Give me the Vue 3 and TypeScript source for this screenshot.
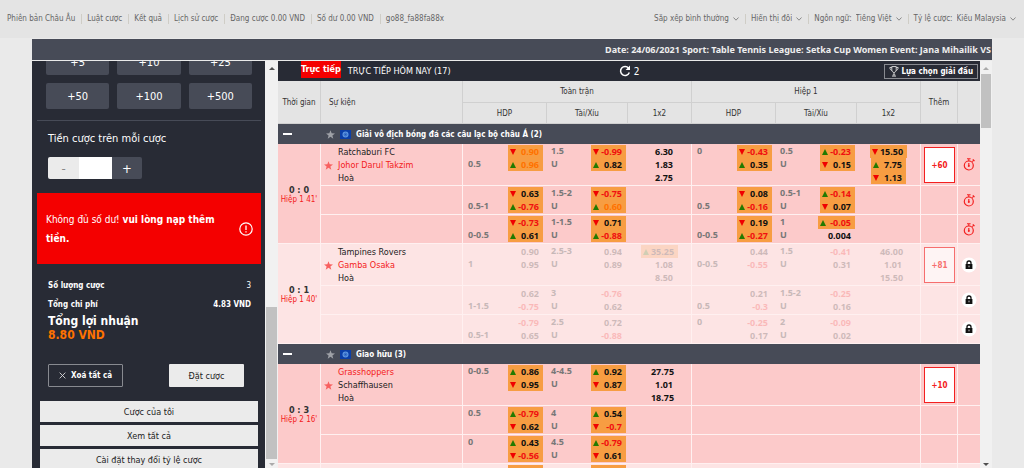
<script setup lang="ts">
type Arrow = 'up' | 'down' | ''

interface Odd {
  value: string
  arrow: Arrow
  tone: 'plain' | 'red' | 'orange'
}

interface Cell {
  kind: 'hdp' | 'ou' | 'x12'
  labels: string[]
  odds: Odd[]
}

interface Line {
  cells: Cell[]
}

interface Match {
  score: string
  clock: string
  home: string
  away: string
  favourite: 'home' | 'away'
  more: string
  locked: boolean
  timer: boolean
  lines: Line[]
}

interface League {
  name: string
  matches: Match[]
}

// "v" / "^" prefix sets the arrow, "!" marks an orange value, a leading minus is red
function odd(text: string): Odd {
  let rest = text
  let arrow: Arrow = ''
  if (rest.startsWith('v')) arrow = 'down'
  if (rest.startsWith('^')) arrow = 'up'
  if (arrow) rest = rest.slice(1)
  const orange = rest.startsWith('!')
  if (orange) rest = rest.slice(1)
  return { value: rest, arrow, tone: orange ? 'orange' : rest.startsWith('-') ? 'red' : 'plain' }
}

// six columns per line, each "labels|odds", entries separated by commas
function line(...columns: string[]): Line {
  const kinds: Cell['kind'][] = ['hdp', 'ou', 'x12', 'hdp', 'ou', 'x12']
  return {
    cells: kinds.map((kind, i) => {
      const [labels = '', odds = ''] = (columns[i] ?? '').split('|')
      return {
        kind,
        labels: labels ? labels.split(',') : [],
        odds: odds ? odds.split(',').map(odd) : [],
      }
    }),
  }
}

const accountLinks = [
  'Phiên bản Châu Âu',
  'Luật cược',
  'Kết quả',
  'Lịch sử cược',
  'Đang cược 0.00 VND',
  'Số dư 0.00 VND',
  'go88_fa88fa88x',
]

const settings = [
  { id: 'sort', label: '', value: 'Sắp xếp bình thường' },
  { id: 'view', label: '', value: 'Hiển thị đôi' },
  { id: 'language', label: 'Ngôn ngữ:', value: 'Tiếng Việt' },
  { id: 'odds', label: 'Tỷ lệ cược:', value: 'Kiểu Malaysia' },
]

const chips = ['+5', '+10', '+25', '+50', '+100', '+500']
const panelLinks = ['Cược của tôi', 'Xem tất cả', 'Cài đặt thay đổi tỷ lệ cược']
const markets = ['HDP', 'Tài/Xíu', '1x2', 'HDP', 'Tài/Xíu', '1x2']

const leagues: League[] = [
  {
    name: 'Giải vô địch bóng đá các câu lạc bộ châu Á (2)',
    matches: [
      {
        score: '0 : 0',
        clock: "Hiệp 1 41'",
        home: 'Ratchaburi FC',
        away: 'Johor Darul Takzim',
        favourite: 'away',
        more: '+60',
        locked: false,
        timer: true,
        lines: [
          line(' ,0.5|v!0.90,^!0.96', '1.5,U|v-0.99,^0.82', '|6.30,1.83,2.75', '0|v-0.43,^0.35', '0.5,U|^-0.23,v0.15', '|v15.50,^7.75,v1.13'),
          line(' ,0.5-1|v0.63,^-0.76', '1.5-2,U|v-0.75,^!0.60', '', ' ,0.5|v0.08,^-0.16', '0.5-1,U|^-0.14,v0.07', ''),
          line(' ,0-0.5|v-0.73,^0.61', '1-1.5,U|v0.71,^-0.88', '', ' ,0-0.5|v0.19,^-0.27', '1,U|^-0.05,0.004', ''),
        ],
      },
      {
        score: '0 : 1',
        clock: "Hiệp 1 40'",
        home: 'Tampines Rovers',
        away: 'Gamba Osaka',
        favourite: 'away',
        more: '+81',
        locked: true,
        timer: false,
        lines: [
          line(' ,1|0.90,0.95', '2.5-3,U|0.94,0.89', '|^35.25,1.08,8.50', ' ,0-0.5|0.44,-0.55', '1.5,U|-0.41,0.31', '|46.00,1.01,15.50'),
          line(' ,1-1.5|0.62,-0.75', '3,U|-0.76,0.62', '', ' ,0.5|0.21,-0.3', '1.5-2,U|-0.25,0.16', ''),
          line(' ,0.5-1|-0.79,0.65', '2.5,U|0.72,-0.88', '', '0|-0.25,0.17', '2,U|-0.09,0.02', ''),
        ],
      },
    ],
  },
  {
    name: 'Giao hữu (3)',
    matches: [
      {
        score: '0 : 3',
        clock: "Hiệp 2 16'",
        home: 'Grasshoppers',
        away: 'Schaffhausen',
        favourite: 'home',
        more: '+10',
        locked: false,
        timer: false,
        lines: [
          line('0-0.5|^0.86,v0.95', '4-4.5,U|^0.92,v0.87', '|27.75,1.01,18.75', '', '', ''),
          line('0.5|^-0.79,v0.62', '4,U|^0.54,v-0.7', '', '', '', ''),
          line('0|^0.43,v-0.56', '4.5,U|^-0.79,v0.61', '', '', '', ''),
        ],
      },
    ],
  },
]
</script>

<template>
  <div class="page">
    <header class="topbar">
      <nav class="links">
        <a v-for="item in accountLinks" :key="item" href="#">{{ item }}</a>
      </nav>
      <div class="settings">
        <div v-for="s in settings" :key="s.id" class="setting">
          <label v-if="s.label" :for="s.id">{{ s.label }}</label>
          <select :id="s.id" :aria-label="s.label || s.value">
            <option>{{ s.value }}</option>
          </select>
          <svg class="chevron" viewBox="0 0 6 4"><path d="M0.5 0.5 3 3.2 5.5 0.5" fill="none" stroke="#888" /></svg>
        </div>
      </div>
    </header>

    <div class="frame">
      <div class="ticker">Date: 24/06/2021 Sport: Table Tennis League: Setka Cup Women Event: Jana Mihailik VS</div>

      <div class="columns">
        <aside class="slip">
          <div class="chips">
            <button v-for="c in chips" :key="c" type="button">{{ c }}</button>
          </div>
          <hr />
          <div class="stake">
            <label for="stake">Tiền cược trên mỗi cược</label>
            <div class="stepper">
              <button type="button" class="minus">-</button>
              <input id="stake" type="text" />
              <button type="button" class="plus">+</button>
            </div>
          </div>
          <div class="alert" role="alert">
            <p>Không đủ số dư! <b>vui lòng nạp thêm tiền.</b></p>
            <svg viewBox="0 0 14 14">
              <circle cx="7" cy="7" r="6.2" fill="none" stroke="#fff" stroke-width="1.2" />
              <path d="M7 3.4V8" stroke="#fff" stroke-width="1.3" />
              <path d="M7 9.2v1.4" stroke="#fff" stroke-width="1.3" />
            </svg>
          </div>
          <dl class="summary">
            <div><dt>Số lượng cược</dt><dd>3</dd></div>
            <div><dt>Tổng chi phí</dt><dd><b>4.83 VND</b></dd></div>
          </dl>
          <p class="profit">Tổng lợi nhuận<strong>8.80 VND</strong></p>
          <div class="actions">
            <button type="button" class="clear">
              <svg viewBox="0 0 8 8"><path d="M0.7 0.7 7.3 7.3M7.3 0.7 0.7 7.3" stroke="#ddd" fill="none" /></svg>
              Xoá tất cả
            </button>
            <button type="button" class="place">Đặt cược</button>
          </div>
          <div class="panel-links">
            <button v-for="p in panelLinks" :key="p" type="button">{{ p }}</button>
          </div>
        </aside>

        <div class="scroll scroll-left">
          <i class="arrow-up dark"></i>
          <span class="thumb"></span>
          <i class="arrow-down"></i>
        </div>

        <main class="board">
          <div class="board-title">
            <div class="live">
              <span class="badge">Trực tiếp</span>
              <h1>TRỰC TIẾP HÔM NAY (17)</h1>
            </div>
            <button type="button" class="refresh">
              <svg viewBox="0 0 12 12">
                <path d="M9.6 3.2A4.5 4.5 0 1 0 10.3 7.6" fill="none" stroke="#fff" stroke-width="1.5" />
                <path d="M11 0.6V5H6.6Z" fill="#fff" />
              </svg>
              2
            </button>
            <button type="button" class="choose">
              <svg viewBox="0 0 10 12" fill="none" stroke="#ddd">
                <path d="M2.6 0.6h4.8v3.2c0 2-1 3-2.4 3.4-1.4-.4-2.4-1.4-2.4-3.4Z" />
                <path d="M2.6 1.6H0.5c0 2 .8 2.9 2.4 3.2M7.4 1.6h2.1c0 2-.8 2.9-2.4 3.2M5 7.2v2.6M2.8 11h4.4M3.6 9.8h2.8" />
              </svg>
              Lựa chọn giải đấu
            </button>
          </div>

          <table>
            <colgroup>
              <col class="w-time" /><col class="w-event" />
              <col class="w-hdp" /><col class="w-ou" /><col class="w-x12" />
              <col class="w-hdp" /><col class="w-ou" /><col class="w-x12" />
              <col class="w-more" /><col class="w-icon" />
            </colgroup>
            <thead>
              <tr>
                <th rowspan="2">Thời gian</th>
                <th rowspan="2" class="event-head">Sự kiện</th>
                <th colspan="3">Toàn trận</th>
                <th colspan="3">Hiệp 1</th>
                <th rowspan="2">Thêm</th>
                <th rowspan="2" class="last"></th>
              </tr>
              <tr>
                <th v-for="(m, i) in markets" :key="i">{{ m }}</th>
              </tr>
            </thead>
            <tbody v-for="league in leagues" :key="league.name">
              <tr class="league">
                <td><span class="dash"></span></td>
                <td colspan="9">
                  <div class="league-name">
                    <svg class="star" viewBox="0 0 10 10"><path d="M5 0.2 6.3 3.7 10 3.8 7.1 6.1 8.1 9.7 5 7.6 1.9 9.7 2.9 6.1 0 3.8 3.7 3.7Z" fill="#9fa1a7" /></svg>
                    <svg class="flag" viewBox="0 0 11 9">
                      <rect width="11" height="9" fill="#0b3fa8" />
                      <circle cx="5.5" cy="4.5" r="3" fill="#5b94e0" />
                      <path d="M3.5 4.5h4M5.5 2.5v4M4 3l3 3M7 3 4 6" stroke="#1d55b8" stroke-width="0.5" />
                    </svg>
                    {{ league.name }}
                  </div>
                </td>
              </tr>
              <template v-for="match in league.matches" :key="match.home">
                <tr v-for="(row, r) in match.lines" :key="r" :class="['line', { tall: r === 0, locked: match.locked }]">
                  <td v-if="r === 0" :rowspan="match.lines.length" class="time">
                    <b>{{ match.score }}</b>
                    <span>{{ match.clock }}</span>
                  </td>
                  <td class="event">
                    <div v-if="r === 0" class="teams">
                      <svg class="star" viewBox="0 0 10 10"><path d="M5 0.2 6.3 3.7 10 3.8 7.1 6.1 8.1 9.7 5 7.6 1.9 9.7 2.9 6.1 0 3.8 3.7 3.7Z" fill="#f8605f" /></svg>
                      <div>
                        <p :class="{ fav: match.favourite === 'home' }">{{ match.home }}</p>
                        <p :class="{ fav: match.favourite === 'away' }">{{ match.away }}</p>
                        <p>Hoà</p>
                      </div>
                    </div>
                  </td>
                  <td v-for="(cell, c) in row.cells" :key="c" :class="cell.kind">
                    <div class="cell">
                      <div v-if="cell.labels.length" class="labels">
                        <span v-for="(l, i) in cell.labels" :key="i">{{ l }}</span>
                      </div>
                      <div v-if="cell.odds.length" class="odds">
                        <a v-for="(o, i) in cell.odds" :key="i" href="#" :class="['odd', o.tone, { moved: o.arrow }]">
                          <i :class="['arrow', o.arrow]"></i>
                          <span>{{ o.value }}</span>
                        </a>
                      </div>
                    </div>
                  </td>
                  <td class="more"><button v-if="r === 0" type="button">{{ match.more }}</button></td>
                  <td class="icon">
                    <svg v-if="match.timer" class="timer" viewBox="0 0 12 13" fill="none" stroke="#f32020">
                      <circle cx="5.8" cy="7.5" r="4.5" stroke-width="1.2" />
                      <path d="M5.8 1v2M4 0.8h3.6M9.3 3.6l1.4-1.4M9.8 1.4l1.7 1.6" stroke-width="1.1" />
                      <path d="M5.8 5v3" stroke-width="1.2" />
                      <circle cx="5.8" cy="8" r="1" fill="#f32020" stroke="none" />
                    </svg>
                    <svg v-if="match.locked" class="lock" viewBox="0 0 16 16">
                      <circle cx="8" cy="8" r="7.5" fill="#fff" />
                      <path d="M6 7.5V6a2 2 0 0 1 4 0v1.5" fill="none" stroke="#111" stroke-width="1.3" />
                      <rect x="4.6" y="7" width="6.8" height="5" fill="#111" />
                      <path d="M8 8.6v1.7" stroke="#fff" stroke-width="0.8" />
                    </svg>
                  </td>
                </tr>
              </template>
            </tbody>
            <tbody>
              <tr class="line next">
                <td></td>
                <td></td>
                <td v-for="k in ['hdp', 'ou']" :key="k" :class="k">
                  <div class="cell"><div class="odds"><span class="odd moved"></span></div></div>
                </td>
                <td></td>
                <td class="hdp"></td>
                <td class="ou"></td>
                <td></td>
                <td></td>
                <td></td>
              </tr>
            </tbody>
          </table>
        </main>

        <div class="scroll scroll-right">
          <i class="arrow-up"></i>
          <span class="thumb"></span>
          <i class="arrow-down dark"></i>
        </div>
      </div>
    </div>
  </div>
</template>

<style>
body {
  background: #eaeaea;
  overflow: hidden;
}
</style>

<style scoped>
* {
  box-sizing: border-box;
}

.page {
  display: flex;
  flex-direction: column;
  height: 100vh;
  font-family: "DejaVu Sans Condensed", "Noto Sans", sans-serif;
  font-size: 9px;
  color: #333;
}

button,
input,
select {
  font: inherit;
  color: inherit;
  border: 0;
  padding: 0;
  margin: 0;
  background: none;
}

a {
  color: inherit;
  text-decoration: none;
}

p,
dl,
dd,
h1 {
  margin: 0;
}

/* top bar */
.topbar {
  display: flex;
  justify-content: space-between;
  align-items: center;
  flex: none;
  height: 38px;
  padding: 0 8px 0 7px;
  background: #e4e4e4;
  color: #666;
  font-size: 8px;
  white-space: nowrap;
}

.links,
.settings,
.setting {
  display: flex;
  align-items: center;
}

.links a,
.setting {
  line-height: 10px;
  padding-right: 6px;
  margin-right: 5px;
  border-right: 1px solid #cfcdc6;
}

.links a:last-child,
.setting:last-child {
  border: 0;
  padding: 0;
  margin: 0;
}

.setting {
  gap: 4px;
}

select {
  appearance: none;
  field-sizing: content;
  line-height: 10px;
}

.chevron {
  width: 6px;
  height: 4px;
}

/* frame */
.frame {
  display: flex;
  flex-direction: column;
  flex: 1;
  min-height: 0;
  margin: 1px 32px 0;
}

.ticker {
  display: flex;
  justify-content: flex-end;
  flex: none;
  height: 21px;
  line-height: 21px;
  margin-bottom: 1px;
  padding-right: 1px;
  overflow: hidden;
  white-space: nowrap;
  background: #474b57;
  color: #eee;
  font-family: "Noto Sans", sans-serif;
  font-weight: bold;
}

.columns {
  display: flex;
  flex: 1;
  min-height: 0;
  background: #f1f1f1;
}

/* bet slip */
.slip {
  flex: none;
  width: 233px;
  overflow: hidden;
  background: #282b35;
  color: #fff;
}

.chips {
  display: grid;
  grid-template-columns: repeat(3, 1fr);
  gap: 8px;
  margin: -12px 13px 0 14px;
}

.chips button {
  height: 26px;
  border-radius: 2px;
  background: #474b57;
  font-size: 11px;
}

.slip hr {
  height: 1px;
  margin: 11px 4px 0 5px;
  border: 0;
  background: #474b57;
}

.stake {
  padding: 10px 16px 14px;
  font-size: 11px;
}

.stake label {
  display: block;
  line-height: 16px;
  margin-bottom: 10px;
}

.stepper {
  display: flex;
  width: 94px;
  height: 22px;
  border-radius: 2px;
  overflow: hidden;
  font-size: 13px;
}

.stepper .minus {
  width: 31px;
  background: #ebebeb;
  color: #888;
}

.stepper input {
  width: 33px;
  background: #fff;
  color: #333;
}

.stepper .plus {
  flex: 1;
  background: #474b57;
}

.alert {
  display: flex;
  align-items: center;
  justify-content: space-between;
  gap: 8px;
  height: 71px;
  margin: 0 4px 0 5px;
  padding: 0 8px 0 9px;
  background: #f40000;
  font-size: 10px;
  line-height: 19px;
}

.alert svg {
  flex: none;
  width: 14px;
  height: 14px;
}

.summary {
  padding: 12px 14px 0 16px;
  font-weight: bold;
  font-size: 8px;
}

.summary div {
  display: flex;
  justify-content: space-between;
  height: 19px;
  line-height: 19px;
}

.summary dd {
  font-weight: normal;
}

.profit {
  padding: 0 16px;
  font-size: 12px;
  font-weight: bold;
  line-height: 14px;
}

.profit strong {
  display: block;
  color: #ff7200;
}

.actions {
  display: flex;
  justify-content: space-between;
  margin: 22px 21px 14px 16px;
}

.actions button {
  display: flex;
  align-items: center;
  justify-content: center;
  gap: 5px;
  width: 75px;
  height: 23px;
  border-radius: 1px;
}

.actions .place {
  background: #ebebeb;
  color: #222;
}

.actions .clear {
  border: 1px solid #888a90;
  font-size: 8px;
  font-weight: bold;
}

.clear svg {
  width: 7px;
  height: 7px;
}

.panel-links {
  display: grid;
  gap: 3px;
  margin: 0 7px 0 8px;
}

.panel-links button {
  height: 21px;
  background: #ebebeb;
  color: #222;
}

/* scroll tracks */
.scroll {
  display: flex;
  flex-direction: column;
  align-items: center;
  flex: none;
  width: 12px;
  padding: 6px 1px 2px;
  background: #f1f1f1;
}

.scroll-left {
  width: 13px;
}

.scroll i {
  border: 3px solid transparent;
}

.scroll .arrow-up {
  border-top: 0;
  border-bottom-color: #aaa;
}

.scroll .arrow-down {
  border-bottom: 0;
  border-top-color: #aaa;
}

.scroll .arrow-up.dark {
  border-bottom-color: #505050;
}

.scroll .arrow-down.dark {
  border-top-color: #505050;
}

.thumb {
  width: 100%;
  background: #c1c1c1;
}

.scroll-left .thumb {
  height: 38%;
  margin: auto 0 4px;
}

.scroll-right .thumb {
  height: 54px;
  margin: 4px 0 auto;
}

/* board */
.board {
  flex: 1;
  min-width: 0;
  overflow: hidden;
}

.board-title {
  display: grid;
  grid-template-columns: 1fr auto 1fr;
  align-items: center;
  height: 20px;
  padding: 0 2px;
  background: #282b35;
  color: #fff;
  white-space: nowrap;
}

.live {
  display: flex;
  align-items: center;
  gap: 7px;
  padding-left: 21px;
}

.badge {
  height: 17px;
  line-height: 17px;
  margin-bottom: 3px;
  background: #f40000;
  font-weight: bold;
}

.board-title h1 {
  font-size: 9px;
  font-weight: normal;
}

.refresh,
.choose {
  display: flex;
  align-items: center;
  gap: 3px;
}

.refresh {
  font-size: 10px;
}

.refresh svg {
  width: 12px;
  height: 12px;
}

.choose {
  justify-self: end;
  gap: 2px;
  height: 15px;
  padding: 0 4px;
  border: 1px solid #888a90;
  font-size: 8px;
  font-weight: bold;
}

.choose svg {
  width: 10px;
  height: 11px;
}

table {
  width: 100%;
  table-layout: fixed;
  border-collapse: separate;
  border-spacing: 0;
}

.w-time { width: 43px; }
.w-event { width: 142px; }
.w-hdp { width: 84px; }
.w-ou { width: 81px; }
.w-x12 { width: 64px; }
.w-more { width: 37px; }
.w-icon { width: 22px; }

th,
td {
  padding: 0;
}

th {
  height: 22px;
  background: #e4e4e4;
  border-right: 1px solid #d0d0d0;
  border-bottom: 1px solid #d0d0d0;
  font-size: 8px;
  font-weight: normal;
}

thead tr + tr th {
  height: 21px;
}

th.event-head {
  text-align: left;
  padding-left: 8px;
}

th.last {
  border-right: 0;
}

.league td {
  height: 20px;
  background: #474b57;
  color: #fff;
  font-size: 8px;
  font-weight: bold;
}

.dash {
  display: block;
  width: 9px;
  height: 2px;
  margin-left: 5px;
  background: #fff;
}

.league-name {
  display: flex;
  align-items: center;
  gap: 5px;
  padding-left: 5px;
}

.star {
  flex: none;
  width: 9px;
  height: 9px;
}

.flag {
  width: 11px;
  height: 9px;
}

.line td {
  height: 29px;
  background: #fccaca;
  border-right: 1px solid #fff0f0;
  border-bottom: 1px solid #fff0f0;
  vertical-align: top;
}

.line.tall td {
  height: 42px;
}

.line.locked td,
.line.next td {
  background: #fde4e4;
}

.line td.hdp,
.line td.ou,
.line td:last-child {
  border-right: 0;
}

.line td.time {
  vertical-align: middle;
  text-align: center;
  padding-top: 2px;
  line-height: 9px;
  white-space: nowrap;
}

.time b,
.time span {
  display: block;
}

.time span {
  color: #f32020;
  font-size: 8px;
}

.teams {
  display: flex;
  align-items: center;
  gap: 5px;
  padding: 2px 0 0 3px;
  line-height: 13px;
  color: #222;
}

.teams .fav {
  color: #f32020;
}

.cell {
  display: flex;
  justify-content: space-between;
  padding-top: 1px;
  font-family: "Noto Sans", sans-serif;
  font-weight: bold;
  line-height: 13px;
}

.hdp .cell {
  padding-left: 5px;
  padding-right: 4px;
}

.ou .cell {
  padding-left: 4px;
  padding-right: 2px;
}

.x12 .cell {
  justify-content: center;
}

.labels {
  display: flex;
  flex-direction: column;
  color: #777;
  line-height: 12px;
}

.labels span {
  height: 13px;
}

.odds {
  display: flex;
  flex-direction: column;
  margin-left: auto;
  color: #111;
}

.x12 .odds {
  align-items: center;
  margin: 0;
}

.odd {
  display: flex;
  align-items: center;
  justify-content: space-between;
  height: 13px;
  padding: 0 4px 0 2px;
  min-width: 35px;
}

.odd.moved {
  background: #f79d42;
}

.odd.red {
  color: #f01010;
}

.odd.orange {
  color: #ff7200;
}

.arrow {
  flex: none;
  width: 6px;
  margin-right: 2px;
}

.arrow.up {
  border: 3px solid transparent;
  border-top: 0;
  border-bottom: 6px solid #237a00;
  width: 0;
}

.arrow.down {
  border: 3px solid transparent;
  border-bottom: 0;
  border-top: 6px solid #f00000;
  width: 0;
}

.locked .cell .odds {
  opacity: 0.2;
}

.locked .labels {
  opacity: 0.4;
}

.line td.more {
  vertical-align: top;
  padding: 3px 2px 0 3px;
}

.more button {
  width: 100%;
  height: 36px;
  background: #fff;
  border: 1px solid #f32020;
  color: #f32020;
  font-size: 8px;
  font-weight: bold;
}

.locked .more button {
  opacity: 0.6;
}

.line td.icon {
  vertical-align: middle;
  text-align: center;
}

.icon svg {
  display: block;
  margin: 0 auto;
}

.timer {
  width: 12px;
  height: 13px;
}

.lock {
  width: 16px;
  height: 16px;
}
</style>
